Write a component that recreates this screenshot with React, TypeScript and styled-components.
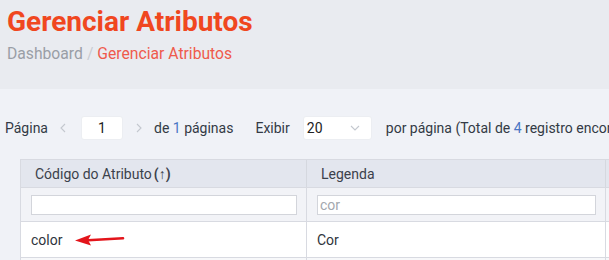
import React from "react";
import styled, { createGlobalStyle } from "styled-components";

const Global = createGlobalStyle`
    html, body {
        margin:0;
        padding:0;
        background:#f0f2f7;
        font-family: Roboto, "Liberation Sans", Arial, sans-serif;
        overflow:hidden;
    }
`;

const Header = styled.div`
    height:89px;
    box-sizing:border-box;
    background-color:#e9ebf0;
    padding:5px 7px 0 7px;
`;
const Title = styled.h1`
    margin:0;
    font-size:28px;
    font-weight:700;
    line-height:34px;
    color:#f0471f;
    white-space:nowrap;
`;
const Crumbs = styled.div`
    margin-top:5px;
    font-size:15.7px;
    line-height:19px;
    color:#9a9ea6;
    white-space:nowrap;
`;
const Sep = styled.span`
    color:#c9ccd2;
    margin:0 4px;
`;
const Current = styled.span`
    color:#ef5a4c;
`;

const Pager = styled.div`
    display:flex;
    align-items:center;
    height:24px;
    margin-top:27px;
    padding-left:5px;
    font-size:14px;
    color:#333a45;
    white-space:nowrap;
    & > * { flex-shrink:0; }
`;
const Chev = styled.span<{ $ml: number; $mr: number }>`
    display:inline-flex;
    margin:0 ${p => p.$mr}px 0 ${p => p.$ml}px;
`;
const Box = styled.div<{ $w: number; $ml: number }>`
    width:${p => p.$w}px;
    margin-left:${p => p.$ml}px;
    height:24px;
    box-sizing:border-box;
    background:#fff;
    border:1px solid #eceef2;
    border-radius:3px;
    display:flex;
    align-items:center;
    font-size:14px;
    color:#222;
`;
const PageBox = styled(Box)`
    justify-content:center;
`;
const SelectBox = styled(Box)`
    justify-content:space-between;
    padding:0 11px 0 3px;
`;
const Num = styled.span`
    color:#4a76c4;
`;
const Label = styled.span<{ $ml?: number }>`
    margin-left:${p => p.$ml || 0}px;
`;

const Table = styled.div`
    margin:19px 0 0 20px;
    width:720px;
    border-left:1px solid #d8dae1;
    border-top:1px solid #d8dae1;
`;
const Row = styled.div<{ $bg: string; $h: number }>`
    display:grid;
    grid-template-columns:286px 299px 1fr;
    height:${p => p.$h}px;
    background:${p => p.$bg};
    border-bottom:1px solid #d8dae1;
`;
const Cell = styled.div<{ $pl?: number }>`
    display:flex;
    align-items:center;
    padding-left:${p => p.$pl ?? 10}px;
    border-right:1px solid #d8dae1;
    font-size:14px;
    color:#2f343c;
    white-space:nowrap;
`;
const HeadCell = styled(Cell)`
    border-right:1px solid #d5d8df;
    color:#3b414b;
`;
const SortMark = styled.b`
    font-weight:700;
    margin-left:2px;
`;
const Filter = styled.input<{ $w: number }>`
    width:${p => p.$w}px;
    height:20px;
    box-sizing:border-box;
    border:1px solid #d3d5db;
    background:#fff;
    font-family: Roboto, "Liberation Sans", Arial, sans-serif;
    font-size:14px;
    padding:0 2px;
    color:#333;
    outline:none;
    &::placeholder { color:#a3a7ae; }
`;

const Arrow = () => (
    <svg width="52" height="14" viewBox="0 0 52 14" style={{ marginLeft: 11 }}>
        <path d="M2 7.5 L18 1.5 L15 7 L18 12.5 Z" fill="#e3151b" />
        <path d="M15 7.2 L50 5.2" stroke="#e3151b" strokeWidth="2.6" strokeLinecap="round" />
    </svg>
);

const Caret = ({ dir }: { dir: "l" | "r" | "d" }) => {
    if (dir === "d")
        return (
            <svg width="10" height="6" viewBox="0 0 10 6">
                <path d="M1 1 L5 5 L9 1" fill="none" stroke="#c4c8cf" strokeWidth="1.1" />
            </svg>
        );
    return (
        <svg width="6" height="10" viewBox="0 0 6 10">
            <path d={dir === "l" ? "M5 1 L1 5 L5 9" : "M1 1 L5 5 L1 9"} fill="none" stroke="#c4c8cf" strokeWidth="1.1" />
        </svg>
    );
};

const App = () => {
    return (
        <>
            <Global />
            <Header>
                <Title>Gerenciar Atributos</Title>
                <Crumbs>
                    Dashboard<Sep>/</Sep><Current>Gerenciar Atributos</Current>
                </Crumbs>
            </Header>
            <Pager>
                <span>Página</span>
                <Chev $ml={12} $mr={0}><Caret dir="l" /></Chev>
                <PageBox $w={42} $ml={15}>1</PageBox>
                <Chev $ml={13} $mr={12}><Caret dir="r" /></Chev>
                <span>de <Num>1</Num> páginas</span>
                <Label $ml={22}>Exibir</Label>
                <SelectBox $w={69} $ml={13}>
                    20
                    <Caret dir="d" />
                </SelectBox>
                <Label $ml={14}>por página (Total de <Num>4</Num> registro encontrados)</Label>
            </Pager>
            <Table>
                <Row $bg="#e3e6ee" $h={27}>
                    <HeadCell $pl={14}>Código do Atributo<SortMark>(↑)</SortMark></HeadCell>
                    <HeadCell $pl={14}>Legenda</HeadCell>
                    <HeadCell />
                </Row>
                <Row $bg="#f2f3f7" $h={33}>
                    <Cell><Filter $w={266} /></Cell>
                    <Cell><Filter $w={279} placeholder="cor" /></Cell>
                    <Cell />
                </Row>
                <Row $bg="#ffffff" $h={35}>
                    <Cell>color<Arrow /></Cell>
                    <Cell>Cor</Cell>
                    <Cell />
                </Row>
                <Row $bg="#f7f8fa" $h={35}>
                    <Cell />
                    <Cell />
                    <Cell />
                </Row>
            </Table>
        </>
    );
};

export default App;
